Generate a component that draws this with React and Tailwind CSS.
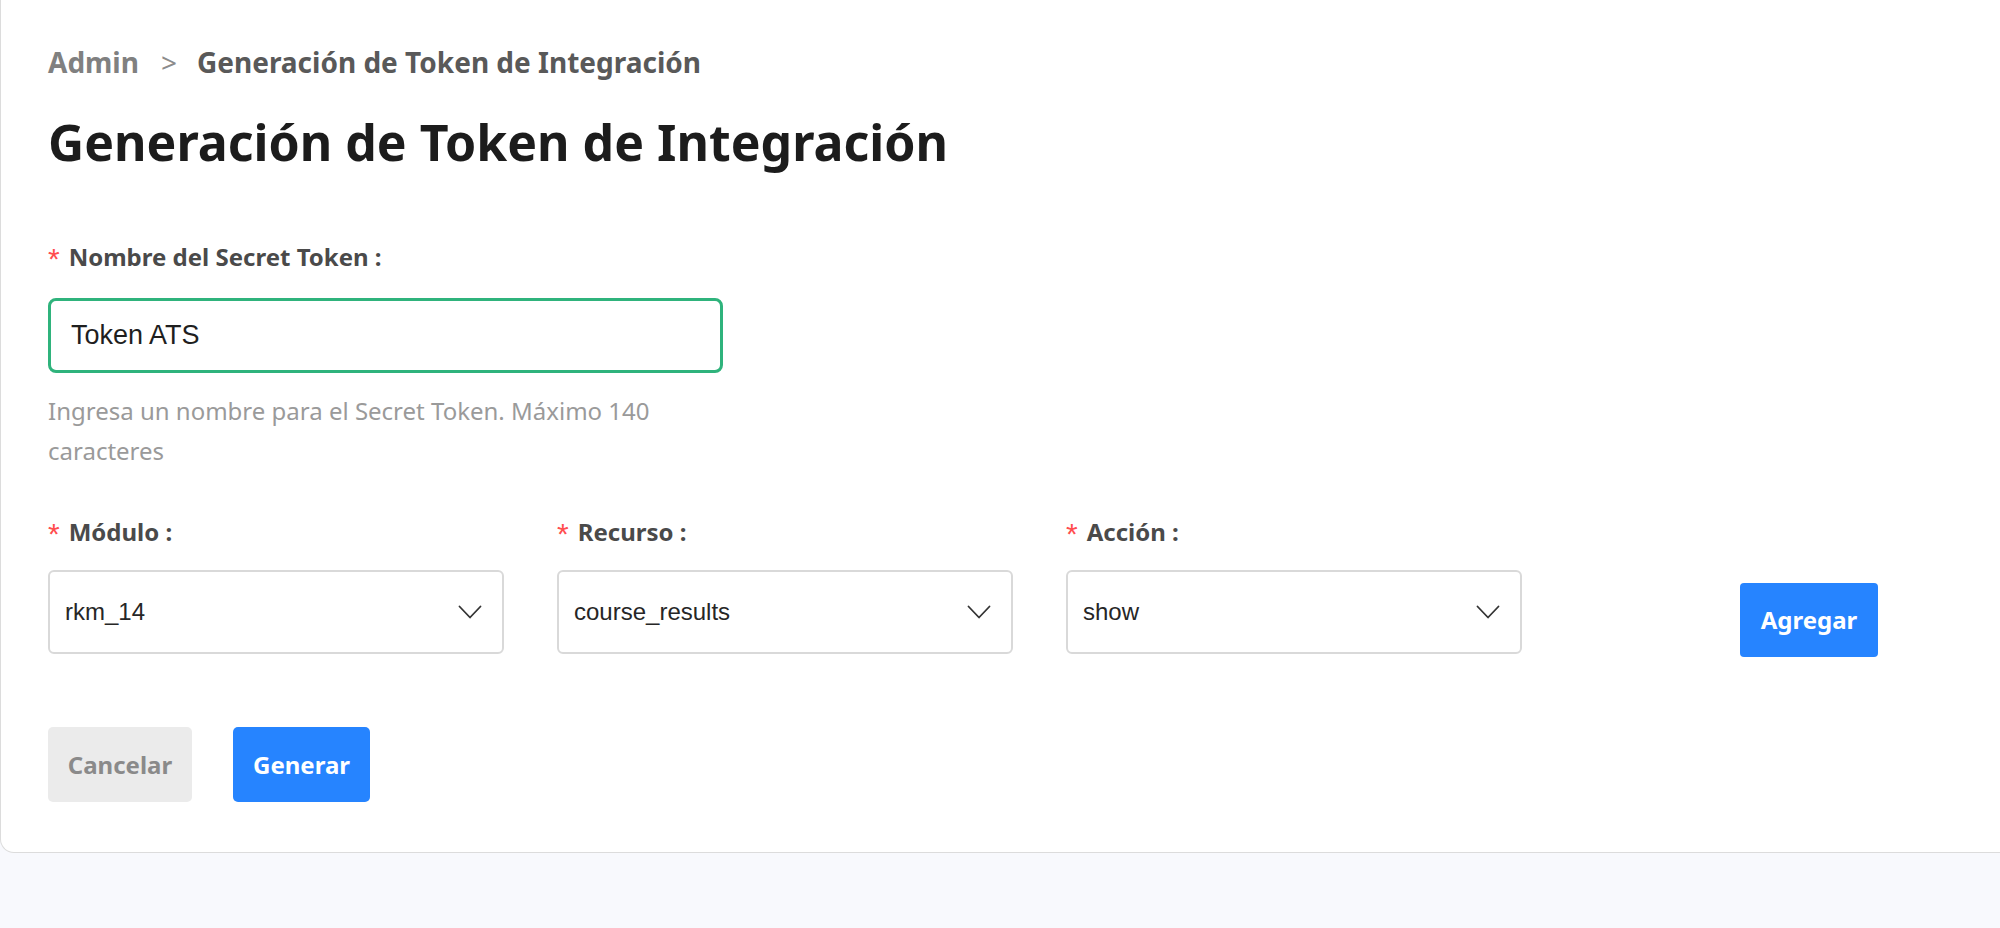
import { useState } from "react";

const modulos = ["rkm_14"];
const recursos = ["course_results"];
const acciones = ["show"];

function Label({ children }) {
  return (
    <div className="h-[36px] flex items-start">
      <span className="mt-[5px] mr-[9px] font-['Liberation_Sans',Arial,sans-serif] text-[30px] leading-none text-[#ff4d4f]">
        *
      </span>
      <span className="text-[24px] leading-[36px] font-bold text-[#4a4a4a]">{children}</span>
    </div>
  );
}

function Chevron() {
  return (
    <svg width="24" height="14" viewBox="0 0 24 14" fill="none" className="shrink-0">
      <path d="M1.5 1.5 L12 12.5 L22.5 1.5" stroke="#333" strokeWidth="1.8" strokeLinecap="round" strokeLinejoin="round" />
    </svg>
  );
}

function SelectBox({ label, value }) {
  return (
    <div className="w-[456px] flex flex-col gap-[20px]">
      <Label>{label}</Label>
      <div className="h-[84px] border-2 border-[#d9d9d9] rounded-[6px] bg-white flex items-center justify-between pl-[15px] pr-[20px]">
        <span className="font-['Liberation_Sans',Arial,sans-serif] text-[24px] text-[#262626]">{value}</span>
        <Chevron />
      </div>
    </div>
  );
}

export default function App() {
  const [name, setName] = useState("Token ATS");

  return (
    <div className="min-h-[928px] bg-[#f8f9fd] font-['Noto_Sans','Open_Sans',sans-serif]">
      <div className="bg-white border-b border-l border-[#dcdcdc] rounded-bl-[14px] pl-[47px] pt-[42px] pb-[50px]">
        <div className="h-[40px] flex items-center text-[28px] leading-[40px] font-bold">
          <span className="text-[#808080]">Admin</span>
          <span className="text-[#8c8c8c] font-normal ml-[22px] mr-[20px]">&gt;</span>
          <span className="text-[#595959]">Generación de Token de Integración</span>
        </div>

        <h1 className="mt-[30px] h-[60px] text-[50px] leading-[60px] font-bold text-[#1c1c1c]">
          Generación de Token de Integración
        </h1>

        <div className="mt-[67px] w-[675px] flex flex-col">
          <Label>Nombre del Secret Token :</Label>
          <input
            value={name}
            onChange={(e) => setName(e.target.value)}
            className="mt-[23px] h-[75px] border-[3px] border-[#2fb37c] rounded-[8px] px-[20px] font-['Liberation_Sans',Arial,sans-serif] text-[27px] text-[#1f1f1f] outline-none"
          />
          <p className="mt-[18px] text-[24px] leading-[40px] text-[#9a9a9a]">
            Ingresa un nombre para el Secret Token. Máximo 140 caracteres
          </p>
        </div>

        <div className="mt-[43px] flex items-start gap-[53px]">
          <SelectBox label="Módulo :" value={modulos[0]} />
          <SelectBox label="Recurso :" value={recursos[0]} />
          <SelectBox label="Acción :" value={acciones[0]} />
          <button className="mt-[69px] ml-[165px] h-[74px] w-[138px] bg-[#2684ff] rounded-[4px] text-white text-[24px] font-bold">
            Agregar
          </button>
        </div>

        <div className="mt-[70px] flex gap-[41px]">
          <button className="h-[75px] w-[144px] bg-[#ebebeb] rounded-[5px] text-[#8a8a8a] text-[24px] font-bold">
            Cancelar
          </button>
          <button className="h-[75px] w-[137px] bg-[#2684ff] rounded-[5px] text-white text-[24px] font-bold">
            Generar
          </button>
        </div>
      </div>
    </div>
  );
}
